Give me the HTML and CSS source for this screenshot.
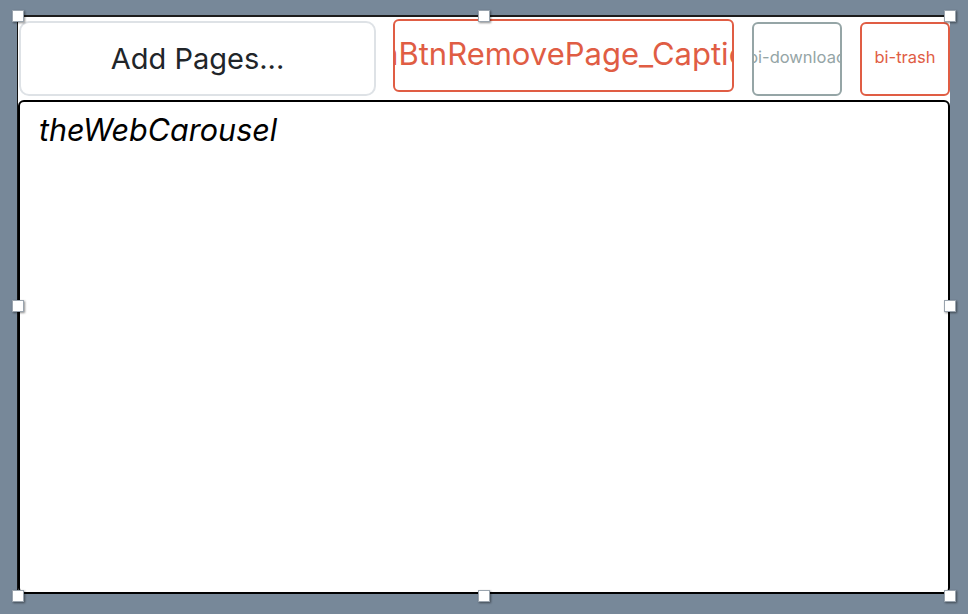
FILE: index.html
```html
<!DOCTYPE html>
<html lang="en">
<head>
  <meta charset="UTF-8">
  <title>Carousel designer</title>
  <link rel="stylesheet" href="styles.css">
</head>
<body>
  <div class="stage">
    <div class="frame">
      <div class="toolbar">
        <button class="btn btn-add">Add Pages...</button>
        <button class="btn btn-remove"><span>aBtnRemovePage_Caption</span></button>
        <button class="btn btn-icon btn-download"><span>bi-download</span></button>
        <button class="btn btn-icon btn-trash"><span>bi-trash</span></button>
      </div>
      <div class="carousel">
        <p class="carousel-name">theWebCarousel</p>
      </div>
    </div>
    <!-- selection grips -->
    <i class="grip g-tl"></i>
    <i class="grip g-tm"></i>
    <i class="grip g-tr"></i>
    <i class="grip g-ml"></i>
    <i class="grip g-mr"></i>
    <i class="grip g-bl"></i>
    <i class="grip g-bm"></i>
    <i class="grip g-br"></i>
  </div>
</body>
</html>
```

FILE: styles.css
```css
html, body {
  margin: 0;
  height: 100%;
}
body {
  background: #778899;
  font-family: Inter, "Noto Sans", sans-serif;
}
.stage {
  position: relative;
  width: 968px;
  height: 614px;
  padding: 15px 0 0 17px;
  box-sizing: border-box;
}
.frame {
  width: 933px;
  height: 579px;
  box-sizing: border-box;
  background: #fff;
  border-top: 2px solid #1c1c1c;
  border-left: 1px solid #111;
  display: flex;
  flex-direction: column;
}
.toolbar {
  display: flex;
  align-items: flex-start;
  height: 79px;
  flex: none;
}
.btn {
  background: #fff;
  font-family: inherit;
  padding: 0;
  display: flex;
  align-items: center;
  justify-content: center;
  overflow: hidden;
  white-space: nowrap;
  box-sizing: border-box;
}
.btn-add {
  width: 357px;
  height: 75px;
  margin: 4px 0 0 1px;
  border: 2px solid #dee2e6;
  border-radius: 10px;
  color: #212529;
  font-size: 29px;
}
.btn-remove {
  width: 341px;
  height: 73px;
  margin: 2px 0 0 17px;
  border: 2px solid #e05d44;
  border-radius: 6px;
  color: #e05d44;
  font-size: 31px;
  padding-bottom: 5px;
  justify-content: flex-start;
}
.btn-remove span {
  margin-left: -14px;
}
.btn-icon {
  width: 90px;
  height: 74px;
  margin: 5px 0 0 18px;
  border-radius: 6px;
  font-size: 16.5px;
  padding-bottom: 5px;
}
.btn-download {
  border: 2px solid #95a5a6;
  color: #95a5a6;
}
.btn-trash {
  border: 2px solid #e05d44;
  color: #e05d44;
}
.carousel {
  flex: 1;
  margin: 4px 0 0 0;
  border: 2px solid #000;
  border-radius: 6px;
  padding: 9px 19px;
}
.carousel-name {
  margin: 0;
  font-style: italic;
  font-size: 30.5px;
  color: #000;
}
.grip {
  position: absolute;
  width: 10px;
  height: 10px;
  background: #fff;
  border: 1px solid #9aa4ae;
  box-shadow: 1px 1px 2px rgba(0, 0, 0, .45);
}
.g-tl { left: 12px; top: 10px; }
.g-tm { left: 478px; top: 10px; }
.g-tr { left: 944px; top: 10px; }
.g-ml { left: 12px; top: 300px; }
.g-mr { left: 944px; top: 300px; }
.g-bl { left: 12px; top: 590px; }
.g-bm { left: 478px; top: 590px; }
.g-br { left: 944px; top: 590px; }
```
